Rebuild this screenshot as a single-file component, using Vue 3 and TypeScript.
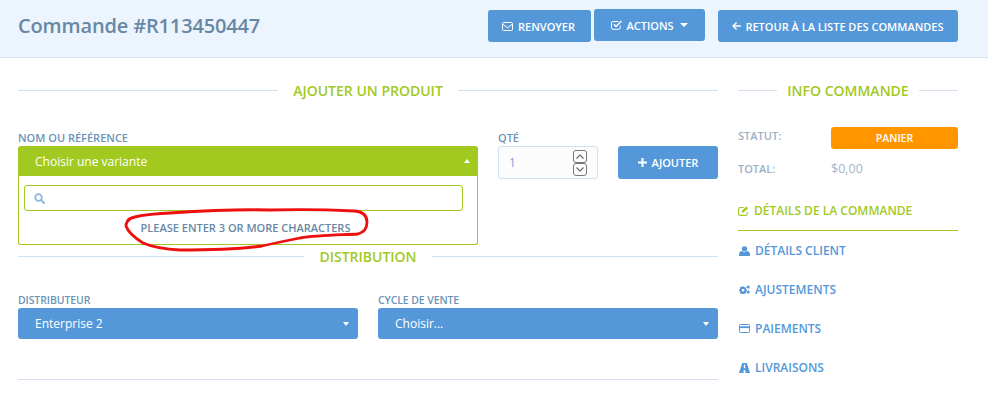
<script setup lang="ts">
const navLinks = [
  { label: 'Détails client', icon: 'user' },
  { label: 'Ajustements', icon: 'cogs' },
  { label: 'Paiements', icon: 'card' },
  { label: 'Livraisons', icon: 'road' },
]
</script>

<template>
  <div class="page">
    <header class="topbar">
      <h1 class="title">Commande #R113450447</h1>
      <div class="actions">
        <button class="btn renvoyer">
          <svg class="ico" width="11" height="9" viewBox="0 0 11 9" fill="none" stroke="currentColor" stroke-width="1">
            <rect x="0.500" y="0.500" width="10" height="8" rx="1" />
            <path d="M.8 2.300 5.500 5.800l4.700-3.500" />
          </svg>
          Renvoyer
        </button>
        <button class="btn actions-btn">
          <svg class="ico" width="11" height="10" viewBox="0 0 11 10" fill="none" stroke="currentColor" stroke-width="1">
            <path d="M9.200 5.500v2.300a1.500 1.500 0 0 1-1.500 1.500H2A1.500 1.500 0 0 1 .5 7.800V3A1.500 1.500 0 0 1 2 1.500h5.500" />
            <path d="M2.800 4.200 5 6.400 10.500 1" stroke-width="1.400" />
          </svg>
          Actions
          <span class="caret-down white" />
        </button>
        <button class="btn retour">
          <svg class="ico" width="9" height="8" viewBox="0 0 11 10" fill="currentColor">
            <path d="M5 0 6.200 1.200 3.400 4H11v2H3.400l2.800 2.800L5 10 0 5z" />
          </svg>
          Retour à la liste des commandes
        </button>
      </div>
    </header>

    <main class="content">
      <div class="left">
        <div class="section-title first"><span>Ajouter un produit</span></div>

        <div class="product-row">
          <div class="field variant">
            <label class="field-label">Nom ou référence</label>
            <div class="select green">
              Choisir une variante
              <span class="caret-up" />
            </div>
            <div class="dropdown">
              <div class="search-box">
                <svg width="11" height="11" viewBox="0 0 11 11" fill="none" stroke="#8db8e4" stroke-width="1.800">
                  <circle cx="4.500" cy="4.500" r="3.300" />
                  <path d="m7 7 3.200 3.200" stroke-linecap="round" stroke-width="2" />
                </svg>
              </div>
              <p class="hint">Please enter 3 or more characters</p>
            </div>
          </div>

          <div class="field qty">
            <label class="field-label">Qté</label>
            <div class="qty-input">
              <span>1</span>
              <div class="spinner">
                <span class="spin-btn">
                  <svg width="8" height="5" viewBox="0 0 8 5" fill="none" stroke="#666" stroke-width="1.100"><path d="M.5 4.500 4 1l3.500 3.500" /></svg>
                </span>
                <span class="spin-btn">
                  <svg width="8" height="5" viewBox="0 0 8 5" fill="none" stroke="#666" stroke-width="1.100"><path d="M.5.5 4 4 7.500.5" /></svg>
                </span>
              </div>
            </div>
          </div>

          <button class="btn add">
            <svg class="ico" width="9" height="9" viewBox="0 0 9 9" fill="currentColor">
              <path d="M3.500 0h2v3.500H9v2H5.500V9h-2V5.500H0v-2h3.500z" />
            </svg>
            Ajouter
          </button>
        </div>

        <div class="section-title second"><span>Distribution</span></div>

        <div class="dist-row">
          <div class="field">
            <label class="field-label condensed">Distributeur</label>
            <div class="select blue">
              Enterprise 2
              <span class="caret-down small" />
            </div>
          </div>
          <div class="field">
            <label class="field-label condensed">Cycle de vente</label>
            <div class="select blue">
              Choisir...
              <span class="caret-down small" />
            </div>
          </div>
        </div>

        <hr class="divider" />
      </div>

      <aside class="side">
        <div class="section-title info"><span>Info commande</span></div>

        <dl class="facts">
          <dt>Statut:</dt>
          <dd><span class="badge">Panier</span></dd>
          <dt class="total">Total:</dt>
          <dd class="total amount">$0,00</dd>
        </dl>

        <nav class="nav">
          <a class="nav-link active">
            <svg width="11" height="10" viewBox="0 0 11 10" fill="none" stroke="currentColor" stroke-width="1.100">
              <path d="M9.200 5.800v2.100a1.500 1.500 0 0 1-1.500 1.500H2.100A1.500 1.500 0 0 1 .6 7.900V3a1.500 1.500 0 0 1 1.500-1.500h3.600" />
              <path d="M3.800 6.400V4.800L8.400.6l1.700 1.600-4.600 4.200z" fill="currentColor" stroke="none" />
            </svg>
            Détails de la commande
          </a>
          <a v-for="link in navLinks" :key="link.label" class="nav-link">
            <svg v-if="link.icon === 'user'" width="11" height="10" viewBox="0 0 10 10" fill="currentColor" preserveAspectRatio="none">
              <circle cx="5" cy="2.700" r="2.500" />
              <path d="M0 10V8.200C0 6.400 1.300 5 2.600 5 3.300 5.500 4.100 5.800 5 5.800S6.700 5.500 7.400 5C8.700 5 10 6.400 10 8.200V10z" />
            </svg>
            <svg v-else-if="link.icon === 'cogs'" width="11" height="9" viewBox="0 0 11 9" fill="currentColor">
              <path fill-rule="evenodd" d="M3.500 1.200h1.100l.3.900.8.4.9-.4.7.8-.4.900.3.800.9.300v1.100l-.9.300-.3.800.4.900-.7.800-.9-.4-.8.300-.3.900H3.500l-.3-.9-.8-.3-.9.400-.7-.8.400-.9-.3-.8L0 5.700V4.600l.9-.3.300-.8-.4-.9.700-.8.900.4.800-.4zM4 3.700a1.400 1.400 0 1 0 .001 0z" />
              <circle cx="9.200" cy="1.900" r="1.500" />
              <circle cx="9.200" cy="6.900" r="1.500" />
            </svg>
            <svg v-else-if="link.icon === 'card'" width="11" height="9" viewBox="0 0 11 9" fill="none" stroke="currentColor" stroke-width="1">
              <rect x="0.500" y="0.500" width="10" height="8" rx="0.800" />
              <path d="M.5 3.200h10" stroke-width="1.800" />
            </svg>
            <svg v-else width="11" height="10" viewBox="0 0 11 10" fill="currentColor">
              <path fill-rule="evenodd" d="M3.200 0h4.600L11 10H6.500l-.2-3H4.700l-.2 3H0zM4.900 1.500l-.1 3.800h1.400l-.1-3.800z" />
            </svg>
            {{ link.label }}
          </a>
        </nav>
      </aside>
    </main>

    <svg class="scribble" width="988" height="411" viewBox="0 0 988 411" fill="none">
      <path
        d="M128 220C132 216 150 214 170 213C200 211 235 209 270 210C300 209 335 210 355 211C364 212 367 216 367 222C367 228 365 232 358 234C340 235 318 235 300 238C285 241 275 243 262 246C240 249 210 250 180 250C160 249 150 246 143 243C135 238 128 232 126 226C126 223 127 221 130 219"
        stroke="#ee0f0f"
        stroke-width="2.800"
        stroke-linecap="round"
      />
    </svg>
  </div>
</template>

<style>
html,
body {
  margin: 0;
  background: #fff;
}
</style>

<style scoped>
.page {
  position: relative;
  width: 988px;
  height: 411px;
  overflow: hidden;
  font-family: "Open Sans", sans-serif;
  color: #6788a5;
}
.topbar {
  display: flex;
  align-items: flex-start;
  justify-content: space-between;
  box-sizing: border-box;
  height: 58px;
  padding: 10px 30px 0 18px;
  background: #ecf4fd;
  border-bottom: 1px solid #d5e1ef;
}
.title {
  margin: 0;
  line-height: 32px;
  font-size: 20px;
  font-weight: 600;
  letter-spacing: -0.15px;
  color: #6788a5;
}
.actions {
  display: flex;
  align-items: flex-start;
}
.btn {
  display: flex;
  align-items: center;
  justify-content: center;
  gap: 5px;
  box-sizing: border-box;
  height: 32px;
  padding: 0;
  border: none;
  border-radius: 3px;
  background: #5498da;
  color: #fff;
  font-family: inherit;
  font-size: 11px;
  font-weight: 600;
  text-transform: uppercase;
}
.btn .ico {
  flex: none;
}
.renvoyer {
  width: 103px;
  padding-right: 2px;
}
.actions-btn {
  width: 111px;
  gap: 4px;
  margin-left: 3px;
  margin-top: -1px;
}
.retour {
  width: 240px;
  gap: 4px;
  margin-left: 13px;
}
.content {
  display: flex;
  gap: 20px;
  padding: 0 30px 0 18px;
}
.left {
  flex: none;
  width: 700px;
}
.side {
  flex: none;
  width: 220px;
}
.section-title {
  display: flex;
  align-items: center;
  gap: 15px;
  height: 20px;
  color: #a2c91f;
  font-size: 14px;
  font-weight: 600;
  text-transform: uppercase;
}
.section-title::before,
.section-title::after {
  content: "";
  flex: 1;
  height: 1px;
  background: #cfe2f5;
}
.section-title.first,
.section-title.info {
  margin-top: 22px;
}
.section-title.info {
  gap: 10px;
}
.section-title.info::before,
.section-title.info::after {
  background: #d5e1ef;
}
.section-title.second {
  margin-top: 67px;
}
.product-row {
  display: flex;
  align-items: flex-start;
  margin-top: 30px;
}
.field {
  display: flex;
  flex-direction: column;
  position: relative;
}
.field-label {
  height: 16px;
  line-height: 16px;
  font-size: 11px;
  font-weight: 600;
  text-transform: uppercase;
  color: #6c93b5;
}
.field-label.condensed {
  font-size: 10.500px;
  letter-spacing: -0.1px;
}
.variant {
  width: 460px;
}
.select {
  position: relative;
  box-sizing: border-box;
  display: flex;
  align-items: center;
  padding-left: 17px;
  border-radius: 3px;
  color: #fff;
  font-size: 12px;
}
.select.green {
  height: 30px;
  background: #a2c91f;
  border-radius: 3px 3px 0 0;
}
.select.blue {
  height: 31px;
  background: #5498da;
}
.caret-up {
  position: absolute;
  right: 8px;
  top: 13px;
  border-left: 3px solid transparent;
  border-right: 3px solid transparent;
  border-bottom: 4px solid #fff;
}
.caret-down {
  border-left: 4px solid transparent;
  border-right: 4px solid transparent;
  border-top: 4px solid #fff;
  margin-left: 2px;
}
.caret-down.small {
  position: absolute;
  right: 9px;
  top: 14px;
  margin: 0;
  border-left-width: 3px;
  border-right-width: 3px;
}
.dropdown {
  position: absolute;
  top: 46px;
  left: 0;
  right: 0;
  z-index: 2;
  box-sizing: border-box;
  height: 69px;
  padding: 9px 14px 0 5px;
  background: #fff;
  border: 1px solid #a2c91f;
  border-top: none;
  border-radius: 0 0 3px 3px;
}
.search-box {
  display: flex;
  align-items: center;
  box-sizing: border-box;
  height: 26px;
  padding-left: 9px;
  border: 1px solid #a2c91f;
  border-radius: 3px;
}
.hint {
  margin: 9px 0 0;
  padding-left: 4px;
  line-height: 15px;
  text-align: center;
  font-size: 11px;
  font-weight: 600;
  text-transform: uppercase;
  color: #6788a5;
}
.qty {
  width: 100px;
  margin-left: 20px;
}
.qty-input {
  display: flex;
  align-items: center;
  justify-content: space-between;
  box-sizing: border-box;
  height: 33px;
  padding: 0 10px;
  background: #fcfcfd;
  border: 1px solid #cfe2f5;
  border-radius: 3px;
  font-size: 12px;
  color: #7f9bdc;
}
.spinner {
  display: flex;
  flex-direction: column;
}
.spin-btn {
  display: flex;
  align-items: center;
  justify-content: center;
  box-sizing: border-box;
  width: 14px;
  height: 13px;
  border: 1px solid #777;
  border-radius: 3px;
}
.add {
  width: 100px;
  height: 33px;
  margin-top: 16px;
  margin-left: 20px;
}
.dist-row {
  display: grid;
  grid-template-columns: 340px 340px;
  gap: 20px;
  margin-top: 26px;
}
.divider {
  height: 1px;
  margin: 40px 0 0;
  border: none;
  background: #d5e1ef;
}
.facts {
  display: grid;
  grid-template-columns: 93px 127px;
  grid-template-rows: 22px 22px;
  row-gap: 8px;
  align-items: center;
  margin: 27px 0 0;
  font-size: 11px;
}
.facts dt {
  align-self: start;
  margin-top: 1px;
  font-weight: 600;
  text-transform: uppercase;
  color: #9ab0c6;
}
.facts dt.total {
  align-self: center;
  margin-top: 0;
}
.facts dd {
  margin: 0;
}
.badge {
  display: flex;
  align-items: center;
  justify-content: center;
  height: 22px;
  border-radius: 3px;
  background: #ff9600;
  color: #fff;
  font-size: 10.500px;
  font-weight: 600;
  text-transform: uppercase;
}
.amount {
  font-size: 12.500px;
  color: #a3b5c9;
}
.nav {
  display: flex;
  flex-direction: column;
  margin-top: 12px;
}
.nav-link {
  display: flex;
  align-items: center;
  gap: 5px;
  height: 39px;
  padding-left: 1px;
  font-size: 12px;
  font-weight: 600;
  text-transform: uppercase;
  color: #5498da;
}
.nav-link.active {
  height: 40px;
  box-sizing: border-box;
  padding-left: 0;
  border-bottom: 1px solid #a2c91f;
  color: #a2c91f;
}
.scribble {
  position: absolute;
  left: 0;
  top: 0;
  z-index: 3;
  pointer-events: none;
}
</style>
